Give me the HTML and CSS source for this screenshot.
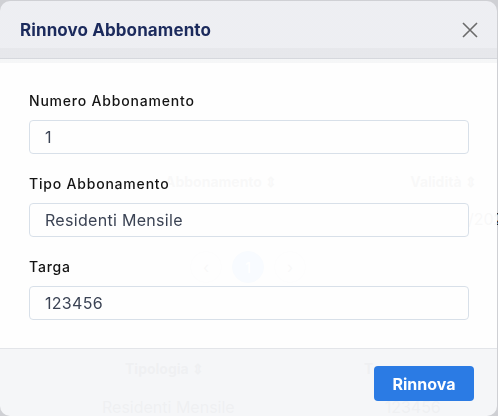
FILE: index.html
```html
<!DOCTYPE html>
<html lang="it">
<head>
<meta charset="utf-8">
<title>Rinnovo Abbonamento</title>
<link rel="stylesheet" href="styles.css">
</head>
<body>
<div class="page" aria-hidden="true">
  <div class="g-row g-head">
    <span class="g-c1">Abbonamento ⇕</span>
    <span class="g-c2">Validità ⇕</span>
  </div>
  <div class="g-row g-date"><span>/2025</span></div>
  <div class="g-pager">
    <span class="g-pg">‹</span>
    <span class="g-pg g-pg-active">1</span>
    <span class="g-pg">›</span>
  </div>
  <div class="g-row g-head2">
    <span class="g-c3">Tipologia ⇕</span>
    <span class="g-c4">T</span>
  </div>
  <div class="g-row g-cell">
    <span class="g-c5">Residenti Mensile</span>
    <span class="g-c6">123456</span>
  </div>
</div>

<div class="modal" role="dialog" aria-labelledby="modal-title">
  <div class="modal-header">
    <h2 id="modal-title" class="modal-title">Rinnovo Abbonamento</h2>
    <button class="close-btn" aria-label="Chiudi">
      <svg width="16" height="16" viewBox="0 0 16 16"><path d="M1 1L15 15M15 1L1 15" stroke="#6b6b6b" stroke-width="1.6" fill="none"/></svg>
    </button>
  </div>
  <div class="modal-body">
    <div class="field">
      <label class="field-label">Numero Abbonamento</label>
      <div class="field-input">1</div>
    </div>
    <div class="field">
      <label class="field-label">Tipo Abbonamento</label>
      <div class="field-input">Residenti Mensile</div>
    </div>
    <div class="field">
      <label class="field-label">Targa</label>
      <div class="field-input">123456</div>
    </div>
  </div>
  <div class="modal-footer">
    <button class="btn-primary">Rinnova</button>
  </div>
</div>
</body>
</html>
```

FILE: styles.css
```css
* { box-sizing: border-box; }
html, body { margin: 0; padding: 0; }
body {
  width: 498px;
  height: 416px;
  overflow: hidden;
  background: #cfd0d4;
  font-family: "Inter", "Noto Sans", sans-serif;
}

/* ghost page behind the modal */
.page {
  color: #222;
  font-size: 14px;
}
.g-row {
  display: flex;
  line-height: 20px;
  white-space: nowrap;
}
.g-head { margin-top: 172px; font-weight: 700; }
.g-c1 { margin-left: 165px; }
.g-c2 { margin-left: 133px; }
.g-date { margin-top: 16px; font-size: 16px; line-height: 22px; }
.g-date span { margin-left: 468px; }
.g-pager {
  display: flex;
  gap: 10px;
  margin-top: 21px;
  padding-left: 190px;
}
.g-pg {
  width: 32px;
  height: 32px;
  border-radius: 50%;
  border: 1px solid #bbb;
  display: flex;
  align-items: center;
  justify-content: center;
  font-size: 16px;
}
.g-pg-active { background: #2b7be4; border-color: #2b7be4; color: #fff; font-size: 14px; }
.g-head2 { margin-top: 76px; font-weight: 700; }
.g-c3 { margin-left: 125px; }
.g-c4 { margin-left: 160px; }
.g-cell { margin-top: 17px; font-size: 16px; line-height: 22px; }
.g-c5 { margin-left: 102px; }
.g-c6 { margin-left: 150px; }

/* modal */
.modal {
  position: fixed;
  top: 1px;
  left: 0;
  width: 497px;
  height: 415px;
  border-radius: 10px;
  overflow: hidden;
  display: flex;
  flex-direction: column;
}
.modal-header {
  height: 58px;
  flex: none;
  display: flex;
  align-items: center;
  justify-content: space-between;
  padding: 0 19px 0 20px;
  background: linear-gradient(to bottom, rgba(238,239,243,0.97) 0, rgba(238,239,243,0.97) 47px, rgba(231,232,236,0.97) 47px);
  border-bottom: 1px solid #d6d8dd;
}
.modal-title {
  margin: 0;
  font-size: 17px;
  font-weight: 700;
  color: #1b2a5c;
  letter-spacing: 0.1px;
}
.close-btn {
  background: none;
  border: 0;
  padding: 0;
  width: 16px;
  height: 16px;
  display: flex;
  cursor: pointer;
}
.modal-body {
  flex: 1;
  padding: 32px 29px 0 29px;
  background: linear-gradient(to bottom, rgba(246,247,248,0.97) 0, rgba(246,247,248,0.97) 4px, rgba(255,255,255,0.97) 4px);
}
.field + .field { margin-top: 20px; }
.field-label {
  display: block;
  font-size: 14px;
  line-height: 20px;
  font-weight: 500;
  letter-spacing: 0.8px;
  color: #141414;
  margin-bottom: 9px;
}
.field-input {
  width: 440px;
  height: 34px;
  border: 1px solid #d8e0e9;
  border-radius: 4px;
  padding: 0 15px;
  font-size: 16px;
  line-height: 32px;
  letter-spacing: 0.3px;
  color: #3b4354;
}
.modal-footer {
  height: 68px;
  flex: none;
  border-top: 1px solid #e3e5e9;
  background: rgba(246,247,249,0.97);
  display: flex;
  justify-content: flex-end;
  align-items: flex-start;
  padding: 17px 23px 0 0;
}
.btn-primary {
  width: 100px;
  height: 35px;
  border: 0;
  border-radius: 4px;
  background: #2b7be4;
  color: #fff;
  font-family: inherit;
  font-size: 16px;
  font-weight: 700;
  cursor: pointer;
}
```
